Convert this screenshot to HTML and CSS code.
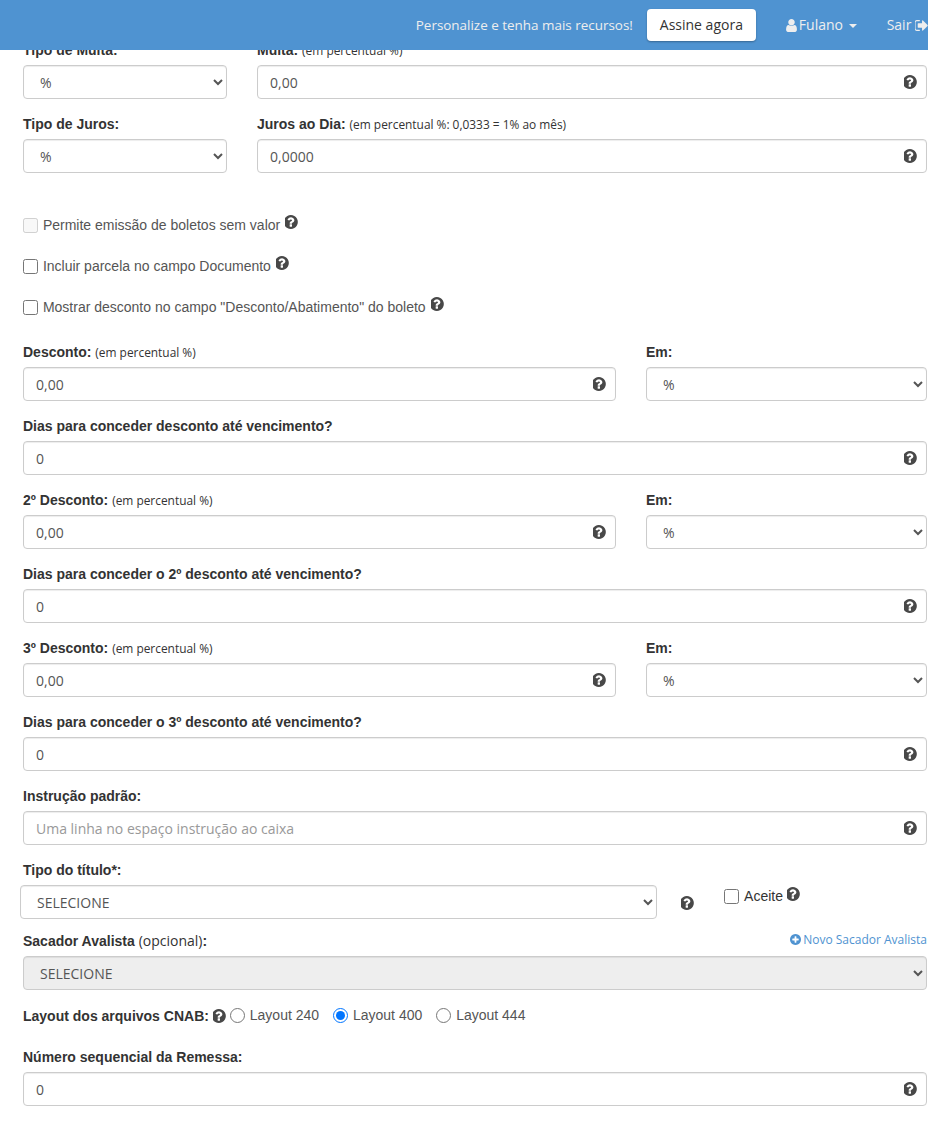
FILE: index.html
```html
<!DOCTYPE html>
<html lang="pt-BR">
<head>
    <meta charset="UTF-8">
    <meta name="viewport" content="width=device-width, initial-scale=1.0">
    <title>Boleto</title>
    <link rel="stylesheet" href="styles.css">
</head>
<body>
    <svg class="defs" width="0" height="0">
        <symbol id="i-help" viewBox="128 128 1536 1536"><path d="M896 1376v-192q0-14-9-23t-23-9h-192q-14 0-23 9t-9 23v192q0 14 9 23t23 9h192q14 0 23-9t9-23zm256-672q0-88-55.500-163t-138.500-116-170-41q-243 0-371 213-15 24 8 42l132 100q7 6 19 6 16 0 25-12 53-68 86-92 34-24 86-24 48 0 85.500 26t37.500 59q0 38-20 61t-68 45q-63 28-115.500 86.500t-52.500 125.500v36q0 14 9 23t23 9h192q14 0 23-9t9-23q0-19 21.500-49.500t54.500-49.500q32-18 49-28.500t46-35 44.500-48 28-60.500 12.500-81zm384 192q0 209-103 385.500t-279.500 279.500-385.500 103-385.500-103-279.500-279.500-103-385.500 103-385.500 279.500-279.500 385.500-103 385.500 103 279.500 279.500 103 385.500z"/></symbol>
        <symbol id="i-user" viewBox="256 128 1280 1536"><path d="M1536 1399q0 109-62.500 187t-150.500 78h-854q-88 0-150.500-78t-62.500-187q0-85 8.500-160.500t31.500-152 58.500-131 94-89 134.500-34.500q131 128 313 128t313-128q76 0 134.500 34.500t94 89 58.500 131 31.500 152 8.500 160.500zm-256-887q0 159-112.500 271.500t-271.500 112.500-271.500-112.500-112.500-271.500 112.500-271.500 271.500-112.500 271.500 112.500 112.500 271.500z"/></symbol>
        <symbol id="i-out" viewBox="128 256 1536 1280"><path d="M704 1440q0 4 1 20t.5 26.500-3 23.500-10 19.500-20.500 6.500h-320q-119 0-203.500-84.500t-84.500-203.500v-704q0-119 84.500-203.500t203.500-84.500h320q13 0 22.500 9.500t9.500 22.500q0 4 1 20t.5 26.500-3 23.500-10 19.500-20.500 6.500h-320q-66 0-113 47t-47 113v704q0 66 47 113t113 47h312l11.500 1 11.500 3 8 5.500 7 9 2 13.500zm928-544q0 26-19 45l-544 544q-19 19-45 19t-45-19-19-45v-288h-448q-26 0-45-19t-19-45v-384q0-26 19-45t45-19h448v-288q0-26 19-45t45-19 45 19l544 544q19 19 19 45z"/></symbol>
        <symbol id="i-plus" viewBox="128 128 1536 1536"><path d="M1344 960v-128q0-26-19-45t-45-19h-256v-256q0-26-19-45t-45-19h-128q-26 0-45 19t-19 45v256h-256q-26 0-45 19t-19 45v128q0 26 19 45t45 19h256v256q0 26 19 45t45 19h128q26 0 45-19t19-45v-256h256q26 0 45-19t19-45zm320-64q0 209-103 385.500t-279.500 279.500-385.500 103-385.500-103-279.500-279.500-103-385.500 103-385.500 279.500-279.500 385.500-103 385.500 103 279.500 279.500 103 385.500z"/></symbol>
    </svg>

    <header class="topbar">
        <span class="promo">Personalize e tenha mais recursos!</span>
        <a class="btn-sign">Assine agora</a>
        <a class="nav-link user-link"><svg class="nav-user"><use href="#i-user"/></svg>Fulano <span class="caret"></span></a>
        <a class="nav-link exit-link">Sair <svg class="nav-out"><use href="#i-out"/></svg></a>
    </header>

    <main class="content">
        <div class="row row-left">
            <div class="group">
                <label class="lbl">Tipo de Multa:</label>
                <select class="ctl"><option>%</option></select>
            </div>
            <div class="group">
                <label class="lbl">Multa: <small>(em percentual %)</small></label>
                <div class="field">
                    <input class="ctl" type="text" value="0,00">
                    <svg class="help in-field"><use href="#i-help"/></svg>
                </div>
            </div>
        </div>
        <div class="row row-left">
            <div class="group">
                <label class="lbl">Tipo de Juros:</label>
                <select class="ctl"><option>%</option></select>
            </div>
            <div class="group">
                <label class="lbl">Juros ao Dia: <small>(em percentual %: 0,0333 = 1% ao mês)</small></label>
                <div class="field">
                    <input class="ctl" type="text" value="0,0000">
                    <svg class="help in-field"><use href="#i-help"/></svg>
                </div>
            </div>
        </div>

        <div class="checks">
            <label class="check"><input type="checkbox" disabled> Permite emissão de boletos sem valor <svg class="help raised"><use href="#i-help"/></svg></label>
            <label class="check"><input type="checkbox"> Incluir parcela no campo Documento <svg class="help raised"><use href="#i-help"/></svg></label>
            <label class="check"><input type="checkbox"> Mostrar desconto no campo "Desconto/Abatimento" do boleto <svg class="help raised"><use href="#i-help"/></svg></label>
        </div>

        <div class="row row-right">
            <div class="group">
                <label class="lbl">Desconto: <small>(em percentual %)</small></label>
                <div class="field">
                    <input class="ctl" type="text" value="0,00">
                    <svg class="help in-field"><use href="#i-help"/></svg>
                </div>
            </div>
            <div class="group">
                <label class="lbl">Em:</label>
                <select class="ctl"><option>%</option></select>
            </div>
        </div>
        <div class="group">
            <label class="lbl">Dias para conceder desconto até vencimento?</label>
            <div class="field">
                <input class="ctl" type="text" value="0">
                <svg class="help in-field"><use href="#i-help"/></svg>
            </div>
        </div>

        <div class="row row-right">
            <div class="group">
                <label class="lbl">2º Desconto: <small>(em percentual %)</small></label>
                <div class="field">
                    <input class="ctl" type="text" value="0,00">
                    <svg class="help in-field"><use href="#i-help"/></svg>
                </div>
            </div>
            <div class="group">
                <label class="lbl">Em:</label>
                <select class="ctl"><option>%</option></select>
            </div>
        </div>
        <div class="group">
            <label class="lbl">Dias para conceder o 2º desconto até vencimento?</label>
            <div class="field">
                <input class="ctl" type="text" value="0">
                <svg class="help in-field"><use href="#i-help"/></svg>
            </div>
        </div>

        <div class="row row-right">
            <div class="group">
                <label class="lbl">3º Desconto: <small>(em percentual %)</small></label>
                <div class="field">
                    <input class="ctl" type="text" value="0,00">
                    <svg class="help in-field"><use href="#i-help"/></svg>
                </div>
            </div>
            <div class="group">
                <label class="lbl">Em:</label>
                <select class="ctl"><option>%</option></select>
            </div>
        </div>
        <div class="group">
            <label class="lbl">Dias para conceder o 3º desconto até vencimento?</label>
            <div class="field">
                <input class="ctl" type="text" value="0">
                <svg class="help in-field"><use href="#i-help"/></svg>
            </div>
        </div>

        <div class="group">
            <label class="lbl">Instrução padrão:</label>
            <div class="field">
                <input class="ctl" type="text" placeholder="Uma linha no espaço instrução ao caixa">
                <svg class="help in-field"><use href="#i-help"/></svg>
            </div>
        </div>

        <div class="group title-group">
            <label class="lbl">Tipo do título*:</label>
            <div class="title-row">
                <select class="ctl title-select"><option>SELECIONE</option></select>
                <svg class="help title-help"><use href="#i-help"/></svg>
                <label class="check aceite"><input type="checkbox"> Aceite <svg class="help raised"><use href="#i-help"/></svg></label>
            </div>
        </div>

        <div class="group sacador-group">
            <div class="label-row">
                <label class="lbl">Sacador Avalista <span class="opt">(opcional)</span>:</label>
                <a class="new-link"><svg class="plus"><use href="#i-plus"/></svg> Novo Sacador Avalista</a>
            </div>
            <select class="ctl" disabled><option>SELECIONE</option></select>
        </div>

        <div class="cnab">
            <span class="lbl">Layout dos arquivos CNAB:</span>
            <svg class="help cnab-help"><use href="#i-help"/></svg>
            <label class="radio"><input type="radio" name="cnab"> Layout 240</label>
            <label class="radio"><input type="radio" name="cnab" checked> Layout 400</label>
            <label class="radio"><input type="radio" name="cnab"> Layout 444</label>
        </div>

        <div class="group">
            <label class="lbl">Número sequencial da Remessa:</label>
            <div class="field">
                <input class="ctl" type="text" value="0">
                <svg class="help in-field"><use href="#i-help"/></svg>
            </div>
        </div>
    </main>
</body>
</html>
```

FILE: styles.css
```css
* {
    box-sizing: border-box;
}
body {
    margin: 0;
    font-family: "Liberation Sans", Arial, sans-serif;
    font-size: 14px;
    line-height: 20px;
    color: #333;
    background-color: #fff;
}
.defs {
    position: absolute;
}

/* top bar */
.topbar {
    position: fixed;
    top: 0;
    left: 0;
    right: 0;
    height: 50px;
    z-index: 10;
    display: flex;
    align-items: center;
    justify-content: flex-end;
    background-color: #4f93d1;
    font-family: "Open Sans", sans-serif;
    color: #eee;
    overflow: hidden;
}
.promo {
    font-size: 13.45px;
    margin-right: 14px;
}
.btn-sign {
    width: 109px;
    height: 32px;
    margin-right: 30px;
    line-height: 32px;
    text-align: center;
    font-size: 14px;
    color: #333;
    background-color: #fff;
    border-radius: 4px;
    box-shadow: 0 1px 2px rgba(0, 0, 0, .3);
}
.nav-link {
    font-size: 14px;
    white-space: nowrap;
}
.user-link {
    margin-right: 30px;
}
.nav-user {
    width: 11px;
    height: 13px;
    margin-right: 2px;
    fill: #eee;
    vertical-align: -2px;
}
.nav-out {
    width: 13px;
    height: 11px;
    fill: #eee;
    vertical-align: -1px;
}
.caret {
    display: inline-block;
    margin-left: 2px;
    vertical-align: middle;
    border-top: 4px solid #eee;
    border-left: 4px solid transparent;
    border-right: 4px solid transparent;
}

/* form */
.content {
    padding: 40px 1px 15px 23px;
}
.row {
    display: grid;
    column-gap: 30px;
}
.row-left {
    grid-template-columns: 204px 1fr;
}
.row-right {
    grid-template-columns: 1fr 281px;
}
.group {
    margin-bottom: 15px;
}
.lbl {
    display: block;
    height: 20px;
    margin-bottom: 5px;
    font-weight: bold;
}
.lbl small {
    font-family: "Open Sans", sans-serif;
    font-size: 11.9px;
    font-weight: normal;
}
.ctl {
    display: block;
    width: 100%;
    height: 34px;
    padding: 6px 12px;
    font-family: "Open Sans", sans-serif;
    font-size: 14px;
    color: #555;
    background-color: #fff;
    border: 1px solid #ccc;
    border-radius: 4px;
    box-shadow: inset 0 1px 1px rgba(0, 0, 0, .075);
}
.ctl::placeholder {
    color: #999;
}
select.ctl:disabled {
    background-color: #eee;
    opacity: 1;
}
.field {
    position: relative;
}
.help {
    width: 14px;
    height: 14px;
    fill: #484848;
}
.in-field {
    position: absolute;
    top: 10px;
    right: 9px;
}
.raised {
    margin-left: 1px;
    vertical-align: 1px;
}

/* checkboxes */
.checks {
    margin: 27px 0 25px;
}
.check {
    display: block;
    height: 20px;
    margin-bottom: 21px;
    color: #555;
}
.check:last-child {
    margin-bottom: 0;
}
.check input {
    width: 15px;
    height: 15px;
    margin: 0 1px 0 0;
    vertical-align: -3px;
}

/* tipo do titulo */
.title-group {
    margin-bottom: 12px;
}
.title-row {
    display: flex;
    align-items: flex-start;
    margin-left: -3px;
}
.title-select {
    flex: 0 0 637px;
    width: 637px;
}
.title-help {
    flex: none;
    margin: 11px 29px 0 24px;
}
.check.aceite {
    margin: 1px 0 0;
    color: #333;
}
.aceite input {
    margin-right: 2px;
}
.aceite .raised {
    margin-left: 0;
    vertical-align: 0;
}

/* sacador */
.sacador-group {
    margin-bottom: 15px;
}
.label-row {
    display: flex;
    justify-content: space-between;
    align-items: flex-start;
}
.opt {
    font-family: "Open Sans", sans-serif;
    font-weight: normal;
}
.new-link {
    font-family: "Open Sans", sans-serif;
    font-size: 12px;
    line-height: 18px;
    color: #4f93d1;
}
.plus {
    width: 11px;
    height: 11px;
    margin-right: -1px;
    fill: #4f93d1;
    vertical-align: -1px;
}

/* cnab */
.cnab {
    display: flex;
    align-items: center;
    height: 20px;
    margin-bottom: 22px;
}
.cnab .lbl {
    margin: 2px 4px 0 0;
}
.cnab-help {
    margin: 2px 3px 0 0;
}
.radio {
    color: #555;
    margin-right: 14px;
}
.radio input {
    width: 15px;
    height: 15px;
    margin: 0 1px 0 0;
    vertical-align: -3px;
}
```
